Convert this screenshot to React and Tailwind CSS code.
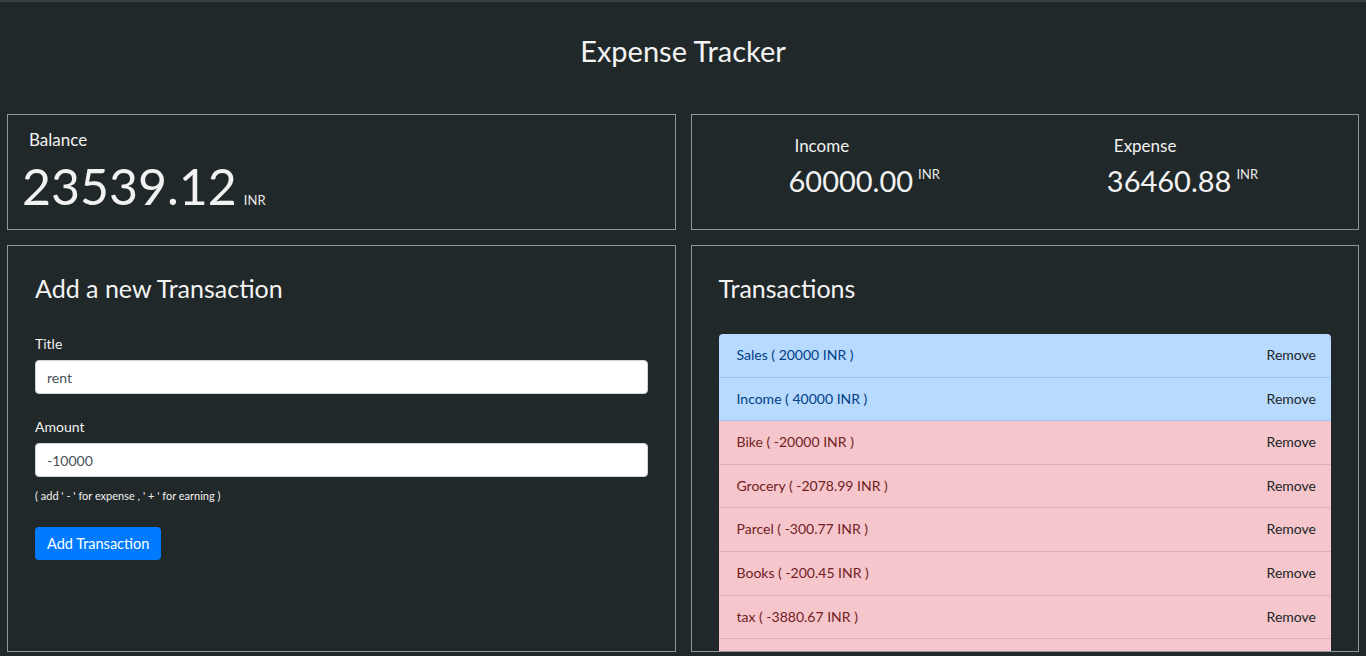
import { useState } from 'react';

const initialTransactions = [
    { id: 1, title: 'Sales', amount: '20000' },
    { id: 2, title: 'Income', amount: '40000' },
    { id: 3, title: 'Bike', amount: '-20000' },
    { id: 4, title: 'Grocery', amount: '-2078.99' },
    { id: 5, title: 'Parcel', amount: '-300.77' },
    { id: 6, title: 'Books', amount: '-200.45' },
    { id: 7, title: 'tax', amount: '-3880.67' },
    { id: 8, title: 'Rent', amount: '-10000' },
];

const App = () => {
    const [transactions, setTransactions] = useState(initialTransactions);
    const [title, setTitle] = useState('rent');
    const [amount, setAmount] = useState('-10000');

    const handleRemove = (id) => {
        setTransactions(transactions.filter(t => t.id !== id));
    };

    const handleAdd = (e) => {
        e.preventDefault();
        if (!title || !amount) return;
        setTransactions([...transactions, { id: Date.now(), title, amount }]);
    };

    return (
        <div className="h-[656px] bg-[#212829] border-t-2 border-[#3b3e3f] font-['Lato','Noto_Sans',sans-serif] text-white overflow-hidden">
            <h1 className="pt-[31px] text-center text-[29px] leading-[36px] font-normal text-[#f4f4f4]">Expense Tracker</h1>

            <div className="mt-[45px] px-[7px] grid grid-cols-2 gap-x-[15px] gap-y-[15px]">
                {/* balance */}
                <div className="h-[116px] border border-[#8e959b] px-[14px] pt-[12px]">
                    <div className="pl-[7px] text-[17px] leading-[26px] text-[#f2f2f2]">Balance</div>
                    <div className="flex items-baseline mt-[4px]">
                        <span className="text-[50px] leading-[58px] text-[#f2f2f2]">23539.12</span>
                        <span className="ml-[7px] text-[13px] text-[#e8e8e8]">INR</span>
                    </div>
                </div>

                {/* income / expense */}
                <div className="h-[116px] border border-[#8e959b] flex pl-[97px] gap-[167px] pt-[18px]">
                    <div>
                        <div className="pl-[6px] text-[17px] leading-[26px] text-[#f2f2f2]">Income</div>
                        <div className="flex items-start mt-[4px]">
                            <span className="text-[29px] leading-[36px] text-[#f2f2f2]">60000.00</span>
                            <span className="ml-[5px] mt-[3px] text-[13px] leading-[16px] text-[#e8e8e8]">INR</span>
                        </div>
                    </div>
                    <div>
                        <div className="pl-[7px] text-[17px] leading-[26px] text-[#f2f2f2]">Expense</div>
                        <div className="flex items-start mt-[4px]">
                            <span className="text-[29px] leading-[36px] text-[#f2f2f2]">36460.88</span>
                            <span className="ml-[5px] mt-[3px] text-[13px] leading-[16px] text-[#e8e8e8]">INR</span>
                        </div>
                    </div>
                </div>

                {/* form */}
                <div className="h-[407px] border border-[#8e959b] px-[27px] pt-[27px]">
                    <h2 className="text-[25px] leading-[30px] text-[#f4f4f4]">Add a new Transaction</h2>
                    <form onSubmit={handleAdd} className="mt-[30px]">
                        <label className="block text-[14px] leading-[21px] text-[#f2f2f2] mb-[6px]">Title</label>
                        <input
                            type="text"
                            value={title}
                            onChange={e => setTitle(e.target.value)}
                            className="w-full h-[34px] px-[11px] bg-white border border-[#ced4da] rounded-[4px] text-[14px] text-[#495057] focus:outline-none"
                        />
                        <label className="block mt-[22px] text-[14px] leading-[21px] text-[#f2f2f2] mb-[6px]">Amount</label>
                        <input
                            type="text"
                            value={amount}
                            onChange={e => setAmount(e.target.value)}
                            className="w-full h-[34px] px-[11px] bg-white border border-[#ced4da] rounded-[4px] text-[14px] text-[#495057] focus:outline-none"
                        />
                        <p className="mt-[11px] text-[11px] leading-[16px] text-[#f2f2f2]">( add ' - ' for expense , ' + ' for earning )</p>
                        <button type="submit" className="mt-[23px] h-[33px] px-[12px] bg-[#007bff] rounded-[4px] text-[14.5px] text-white">Add Transaction</button>
                    </form>
                </div>

                {/* transactions */}
                <div className="h-[407px] border border-[#8e959b] px-[27px] pt-[27px] overflow-hidden">
                    <h2 className="text-[25px] leading-[30px] text-[#f4f4f4]">Transactions</h2>
                    <ul className="mt-[31px] rounded-t-[4px] overflow-hidden">
                        {transactions.map(t => {
                            const income = !t.amount.startsWith('-');
                            return (
                                <li
                                    key={t.id}
                                    className={`flex justify-between items-center px-[18px] py-[12px] text-[14px] leading-[18.6px] border-b ${income ? 'bg-[#b8daff] text-[#004085] border-[#9ec5ec]' : 'bg-[#f5c6cb] text-[#721c24] border-[#dcadb3]'}`}
                                >
                                    <span>{t.title} ( {t.amount} INR )</span>
                                    <button onClick={() => handleRemove(t.id)} className="text-[#212529] mr-[-3px]">Remove</button>
                                </li>
                            );
                        })}
                    </ul>
                </div>
            </div>
        </div>
    );
};

export default App;
